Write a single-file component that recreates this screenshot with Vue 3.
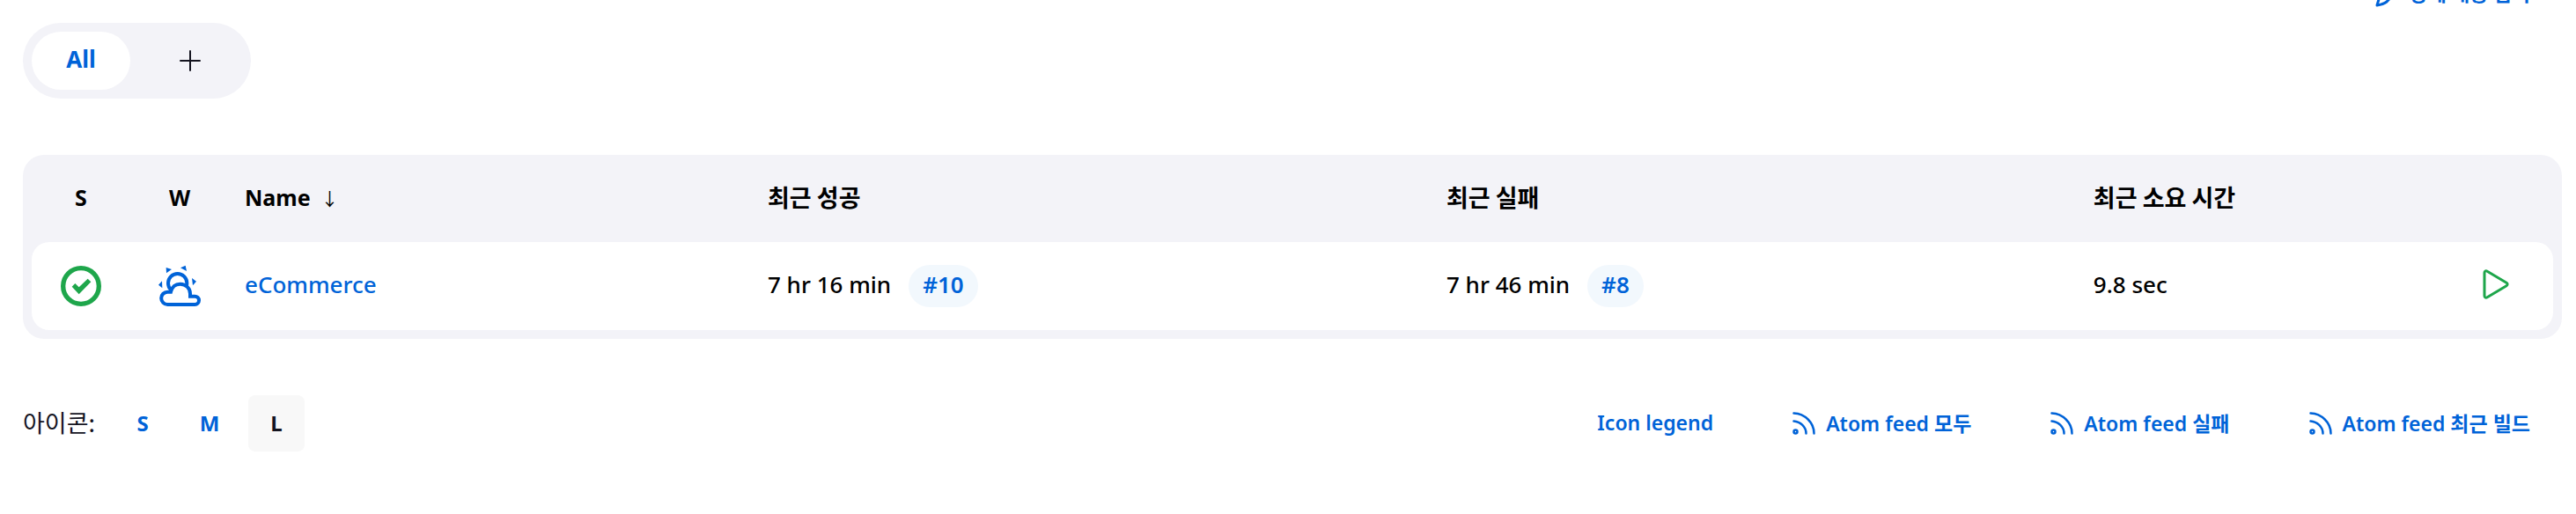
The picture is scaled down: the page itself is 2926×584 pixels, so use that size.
<script setup>
import { ref } from 'vue'

const sizes = ['S', 'M', 'L']
const size = ref('L')
const feeds = ['Atom feed 모두', 'Atom feed 실패', 'Atom feed 최근 빌드']
const jobs = [
  {
    name: 'eCommerce',
    success: { ago: '7 hr 16 min', build: '#10' },
    failure: { ago: '7 hr 46 min', build: '#8' },
    duration: '9.8 sec',
  },
]
</script>

<template>
  <main class="page">
    <div class="actions">
      <a class="link ko" href="#">
        <svg class="pencil" viewBox="0 0 32 32" aria-hidden="true">
          <path d="M3 30L6 20L22 3a4 4 0 0 1 7 7L14 26Q10 29 3 30z" />
        </svg>
        <span>상세 내용 입력</span>
      </a>
    </div>

    <nav class="tabs" aria-label="Views">
      <a class="tab active" href="#">All</a>
      <a class="tab add" href="#" aria-label="New view">
        <svg class="plus" viewBox="0 0 26 26" aria-hidden="true"><path d="M13 2v22M2 13h22" /></svg>
      </a>
    </nav>

    <div class="panel">
      <table class="jobs">
        <colgroup>
          <col class="c-status" /><col class="c-weather" /><col class="c-name" />
          <col class="c-success" /><col class="c-failure" /><col /><col class="c-run" />
        </colgroup>
        <thead>
          <tr>
            <th class="mid">S</th>
            <th class="mid">W</th>
            <th>Name<span class="arrow">↓</span></th>
            <th class="ko">최근 성공</th>
            <th class="ko">최근 실패</th>
            <th class="ko">최근 소요 시간</th>
            <th></th>
          </tr>
        </thead>
        <tbody>
          <tr v-for="job in jobs" :key="job.name">
            <td class="mid">
              <svg class="status" viewBox="0 0 138 138" role="img" aria-label="Success">
                <circle cx="69" cy="69" r="61" />
                <path d="M38 71L49 60L62 73L92 44L103 55L62 97z" />
              </svg>
            </td>
            <td class="mid">
              <svg class="weather" viewBox="0 0 144 144" role="img" aria-label="Weather">
                <circle class="line" cx="65" cy="62" r="32" />
                <path class="line" d="M31 135a21 21 0 0 1 0 -43H42C46 75 58 65 74 65C93 65 108 80 108 98V107H124a14 14 0 0 1 0 28z" />
                <path class="ray" d="M26 9L45 15L27 28zM75 10L92 2L96 21zM0 68L12 55L13 79zM114 45L129 56L117 70z" />
              </svg>
            </td>
            <td class="text"><a class="job" href="#">{{ job.name }}</a></td>
            <td>{{ job.success.ago }}<a class="badge" href="#">{{ job.success.build }}</a></td>
            <td>{{ job.failure.ago }}<a class="badge" href="#">{{ job.failure.build }}</a></td>
            <td class="text">{{ job.duration }}</td>
            <td class="text">
              <button class="run" type="button" aria-label="Build">
                <svg viewBox="0 0 30 34" aria-hidden="true">
                  <path d="M2 4v26c0 2 1.5 2.8 3.2 1.7l21.8-13c1.5-1 1.5-2.4 0-3.4L5.2 2.3C3.5 1.2 2 2 2 4z" />
                </svg>
              </button>
            </td>
          </tr>
        </tbody>
      </table>
    </div>

    <footer class="footer">
      <div class="sizes">
        <span class="label ko">아이콘:</span>
        <button
          v-for="s in sizes"
          :key="s"
          type="button"
          class="size"
          :class="{ on: size === s }"
          @click="size = s"
        >{{ s }}</button>
      </div>
      <div class="feeds">
        <a class="link" href="#"><span>Icon legend</span></a>
        <a v-for="feed in feeds" :key="feed" class="link" href="#">
          <svg class="rss" viewBox="0 0 52 52" aria-hidden="true">
            <path d="M3 3C28 4 49 24 49 49M3 21C18 22 31 34 31 49" />
            <circle cx="7" cy="45" r="4" />
          </svg>
          <span>{{ feed }}</span>
        </a>
      </div>
    </footer>
  </main>
</template>

<style>
body {
  margin: 0;
  background: #fff;
}
</style>

<style scoped>
.page {
  display: flow-root;
  padding: 0 16px 0 26px;
  font-family: "Noto Sans", "Noto Sans CJK KR", sans-serif;
  font-size: 26px;
  color: #14141f;
}
a {
  color: #0063d8;
  text-decoration: none;
}
button {
  border: 0;
  background: none;
  font-family: inherit;
  cursor: pointer;
}
svg {
  fill: none;
  display: block;
}
.actions {
  display: flex;
  justify-content: flex-end;
  margin-top: -40px;
}
.link {
  display: flex;
  align-items: center;
  gap: 12px;
  height: 64px;
  padding: 0 36px;
  font-size: 23px;
  font-weight: 600;
  white-space: nowrap;
}
.link span {
  padding-bottom: 2px;
}
.ko {
  font-family: "Noto Sans CJK KR", sans-serif;
}
.link.ko {
  gap: 8px;
}
.pencil {
  width: 32px;
  height: 32px;
  stroke: currentColor;
  stroke-width: 3;
  stroke-linejoin: round;
}
.tabs {
  display: flex;
  gap: 8px;
  width: max-content;
  margin: 2px 0 64px;
  padding: 10px;
  border-radius: 43px;
  background: #f3f3f8;
}
.tab {
  display: flex;
  align-items: center;
  justify-content: center;
  box-sizing: border-box;
  min-width: 112px;
  height: 66px;
  border-radius: 33px;
  font-weight: 700;
}
.tab.active {
  padding-bottom: 4px;
  background: #fff;
}
.tab.add {
  min-width: 119px;
  color: #14141f;
}
.plus {
  width: 26px;
  height: 26px;
  stroke: currentColor;
  stroke-width: 2;
  stroke-linecap: round;
}
.panel {
  padding: 0 10px 10px;
  border-radius: 24px;
  background: #f3f3f8;
}
.jobs {
  width: 100%;
  table-layout: fixed;
  border-spacing: 0;
  color: #000;
}
.c-status { width: 112px; }
.c-weather { width: 112px; }
.c-name { width: 20.74%; }
.c-success { width: 26.92%; }
.c-failure { width: 25.66%; }
.c-run { width: 98px; }
th,
td {
  box-sizing: border-box;
  padding: 0 18px;
  text-align: left;
  white-space: nowrap;
}
th {
  height: 99px;
  padding-bottom: 4px;
  font-size: 25px;
  font-weight: 700;
}
th.ko {
  font-size: 27px;
}
td {
  height: 100px;
  background: #fff;
  font-weight: 500;
}
td.text {
  padding-bottom: 4px;
}
td:first-child { border-radius: 20px 0 0 20px; }
td:last-child { border-radius: 0 20px 20px 0; }
.mid {
  padding-left: 0;
  padding-right: 0;
  text-align: center;
}
.arrow {
  margin-left: 12px;
  font-size: 20px;
  font-weight: 400;
}
.status {
  width: 46px;
  height: 46px;
  margin: 0 auto;
}
.status circle {
  stroke: #1ea64b;
  stroke-width: 16;
}
.status path {
  fill: #1ea64b;
}
.weather {
  width: 48px;
  height: 48px;
  margin: 0 auto;
}
.line {
  fill: #fff;
  stroke: #0063d8;
  stroke-width: 12;
}
.ray {
  fill: #0063d8;
}
.badge {
  display: inline-block;
  margin-left: 20px;
  padding: 0 16px 4px;
  border-radius: 24px;
  background: #f2f8fd;
  font-weight: 600;
  line-height: 44px;
}
.run {
  display: block;
  padding: 0;
}
.run svg {
  width: 30px;
  height: 34px;
  stroke: #1ea64b;
  stroke-width: 3;
}
.footer {
  display: flex;
  justify-content: space-between;
  margin-top: 64px;
}
.sizes {
  display: flex;
  align-items: center;
  gap: 12px;
}
.label {
  margin-right: 10px;
  padding-bottom: 4px;
  font-size: 27px;
}
.size {
  width: 64px;
  height: 64px;
  padding: 0 0 2px;
  border-radius: 8px;
  color: #0063d8;
  font-size: 24px;
  font-weight: 700;
}
.size.on {
  background: #f8f8f8;
  color: #14141f;
}
.feeds {
  display: flex;
  gap: 18px;
}
.rss {
  width: 26px;
  height: 26px;
  stroke: currentColor;
  stroke-width: 5;
  stroke-linecap: round;
}
</style>
